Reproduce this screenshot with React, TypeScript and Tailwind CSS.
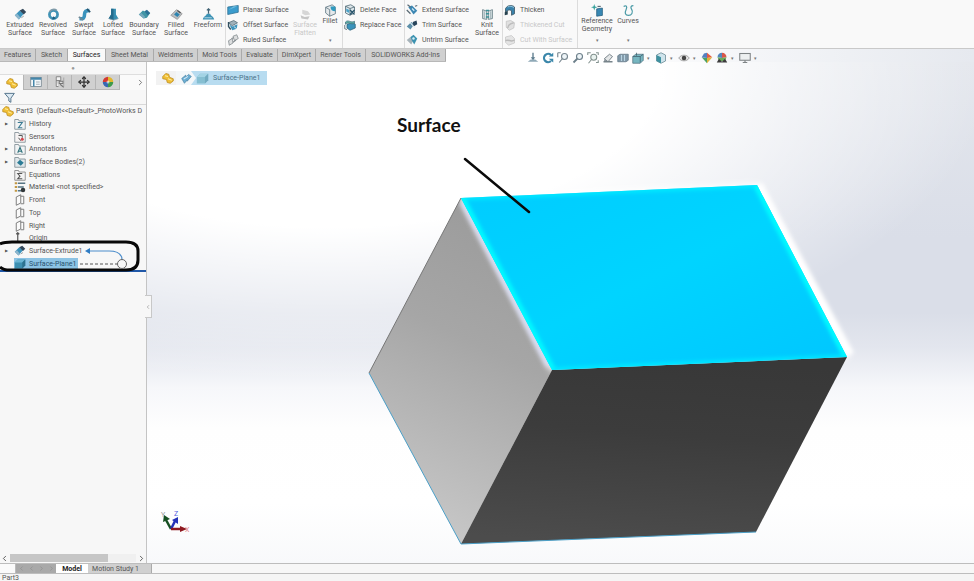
import { type ReactNode } from "react";
import { ChevronLeft, ChevronRight, Move } from "lucide-react";

type IconName = keyof typeof ART;

// all drawn on a 16 x 16 grid
const ART = {
  extrude: (
    <>
      <path d="M1 9l6-6 5 4-6 7z" fill="#3d94bd" />
      <path d="M7 3l4-2 4 4-3 3z" fill="#33475a" />
      <path d="M1 9l5 5 2-2-4-5z" fill="#8fb6cc" />
      <path d="M9 12l3-2" stroke="#8a8a8a" />
    </>
  ),
  revolve: (
    <>
      <circle cx="8" cy="8" r="5" fill="none" stroke="#3f92b5" strokeWidth="3.4" />
      <path d="M3 5a6 6 0 0 1 9-2" fill="none" stroke="#7f9aa8" strokeWidth="2" />
      <path d="M6 14l5-1-3-3z" fill="#1f5f80" />
    </>
  ),
  sweep: (
    <>
      <path d="M2 13c5 1 6-1 6-5s2-5 6-5" fill="none" stroke="#3a93bd" strokeWidth="4.4" />
      <path d="M1 11l5 4" stroke="#6f8793" strokeWidth="2" />
      <path d="M11 1l4 4" stroke="#27536b" strokeWidth="2" />
    </>
  ),
  loft: (
    <>
      <path d="M5 1h6v7l3 5-6 2-6-2 3-5z" fill="#368fb2" />
      <path d="M5 1h3v14l-6-2 3-5z" fill="#246b8c" />
      <path d="M2 13l6 2 6-2" fill="none" stroke="#87a0ac" />
    </>
  ),
  boundary: (
    <>
      <path d="M1 8l5-5 4 2 5 1-4 6-4 1z" fill="#3f94a5" />
      <path d="M8 4l3-2 4 4-3 3z" fill="#2b6f95" />
      <path d="M1 8l6 5 2-2-5-5z" fill="#75a8bd" />
    </>
  ),
  body: (
    <>
      <path d="M1 8l6-5v3l4-4 4 3-6 7v-2l-4 5z" fill="#6badd2" stroke="#4a86a8" />
      <path d="M4 9l6-4" stroke="#d9eef9" strokeWidth="1.5" />
    </>
  ),
  fill: (
    <>
      <path d="M1 9l7-7 7 5-6 7z" fill="#b9bdc0" stroke="#999" />
      <path d="M5 8l3-3 4 3-3 3z" fill="#2d84b0" />
      <path d="M9 3l4 3" stroke="#555" strokeWidth="1.6" />
    </>
  ),
  freeform: (
    <>
      <path d="M1 14c1-4 4-4 5-7h4c1 3 4 3 5 7z" fill="#3e93b5" />
      <path d="M8 1v6M6 3l2-2 2 2" fill="none" stroke="#416274" strokeWidth="1.5" />
      <path d="M3 12h9" stroke="#c5e2ed" />
    </>
  ),
  planar: (
    <>
      <path d="M1 4l14-2v9L1 14z" fill="#3b9ccd" stroke="#2b6f93" />
      <path d="M2 8l7-5 5 0z" fill="#6fbde0" />
    </>
  ),
  offset: (
    <>
      <path d="M2 5l7-3 5 3-7 4z" fill="#9fb1ba" stroke="#4d6470" />
      <path d="M3 7l4 3 7-3-1 6-6 2z" fill="#3d93bb" />
      <path d="M2 4v6l3 4" fill="none" stroke="#33505f" strokeWidth="1.8" />
      <path d="M9 10l4 3" stroke="#fff" />
    </>
  ),
  ruled: (
    <>
      <path d="M2 9l5-3 1 6-5 3zM8 3l5-2 2 5-5 3z" fill="#dcdedf" stroke="#7e868a" />
      <path d="M6 6l3-1M8 11l4-3" stroke="#868e92" strokeWidth="1.4" />
    </>
  ),
  flatten: (
    <>
      <path d="M4 2l7 2 3 4-6 1-4-2z" fill="#d6d6d6" />
      <path d="M2 9l5 2 6-1-2 4-8-1z" fill="#c5c5c5" />
    </>
  ),
  fillet: (
    <>
      <path d="M2 4l8-3 4 3v8l-7 3-5-4z" fill="#e5e9eb" stroke="#5d7480" />
      <path d="M8 3h6v6c-4 0-6-2-6-6z" fill="#2f9ac0" />
      <path d="M2 4l5 3v8" fill="none" stroke="#5d7480" />
    </>
  ),
  deleteFace: (
    <>
      <path d="M2 3l7-2 5 3v8l-6 3-6-3z" fill="#dfe8ec" stroke="#47616e" />
      <path d="M2 3l6 3 6-2M8 6v9" fill="none" stroke="#47616e" />
      <path d="M8 8l6 6M14 8l-6 6" stroke="#27546b" strokeWidth="1.8" />
      <path d="M3 6l4 2v4l-4-2z" fill="#4aa3c9" />
    </>
  ),
  replaceFace: (
    <>
      <path d="M4 7l8-2 3 2v5l-7 3-4-3z" fill="#3a93bb" stroke="#2b6077" />
      <path d="M2 4c4-4 7 2 12-1v3C9 8 6 3 2 7z" fill="#5bb0a6" stroke="#46707d" />
      <path d="M1 8v5l3 1" stroke="#41565f" fill="none" />
    </>
  ),
  extend: (
    <>
      <path d="M3 4l5-2 7 7-5 5z" fill="#3c87b3" />
      <path d="M1 8l5 5M2 1l4 3M12 3l3-1" stroke="#5b6b75" strokeWidth="1.6" />
      <path d="M8 6l3 3" stroke="#d4edf8" strokeWidth="1.5" />
    </>
  ),
  trim: (
    <>
      <path d="M1 10l6-6 4 3-5 7z" fill="#5c8fa9" />
      <path d="M9 4l5-2 1 5-5 3z" fill="#28445a" />
      <path d="M4 3l8 9" stroke="#e7eff3" strokeWidth="1.5" />
    </>
  ),
  untrim: (
    <>
      <path d="M1 8l5-4 4 4-3 6z" fill="#a6b3ba" />
      <path d="M6 4l4-3 5 5-4 8-3-5z" fill="#3c92b0" />
      <circle cx="10" cy="6" r="1.6" fill="#d6eff6" />
    </>
  ),
  knit: (
    <>
      <path d="M2 2l5 2v10l-5-1zM14 2L9 4v10l5-1z" fill="#e3ecee" stroke="#5f777f" />
      <path d="M6 3h4M6 7h4M6 11h4" stroke="#3d9098" strokeWidth="1.8" />
      <path d="M4 4v9M12 4v9" stroke="#8b9da4" />
    </>
  ),
  thicken: (
    <>
      <path d="M2 6c3-5 9-5 12-2v9l-4 2V9c-3-2-5-1-8 2z" fill="#3982ab" stroke="#38505c" />
      <path d="M1 11l4-2v5l-4 1z" fill="#27424f" />
      <path d="M5 4c3-2 6-1 8 1" stroke="#b3dcf0" fill="none" />
    </>
  ),
  thickCut: (
    <>
      <path d="M3 3l6-1 5 3-1 7-6 3-4-4z" fill="#e1e1e1" stroke="#c2c2c2" />
      <path d="M5 12c0-4 4-6 8-7" stroke="#bdbdbd" fill="none" strokeWidth="2" />
    </>
  ),
  surfCut: (
    <>
      <path d="M2 4l8-2 4 4v6l-8 3-4-4z" fill="#e4e4e4" stroke="#c6c6c6" />
      <path d="M2 9c4-3 7 3 12-1" stroke="#b9b9b9" fill="none" strokeWidth="2" />
    </>
  ),
  reference: (
    <>
      <path d="M7 6l7-1v9l-7 1z" fill="#3888b4" stroke="#2c6482" />
      <path d="M4 0l1 3 3 1-3 1-1 3-1-3-3-1 3-1z" fill="#3aa39e" />
      <path d="M8 3h4" stroke="#5c6f78" strokeWidth="1.5" />
    </>
  ),
  curves: (
    <path
      d="M2 3c3-2 5 0 3 4s-1 7 3 7 6-4 4-7-1-5 2-5"
      fill="none"
      stroke="#4a9aa6"
      strokeWidth="1.5"
    />
  ),
  part: (
    <>
      <path d="M1 6l4-4 4 1 1 4 5 2v3l-4 3-4-1-1-4-5-1z" fill="#f0bf35" stroke="#b98a1c" />
      <path d="M4 5l4 1M8 9l5 2" stroke="#fff0ae" strokeWidth="1.3" />
    </>
  ),
  props: (
    <>
      <rect x="1" y="2" width="14" height="12" fill="#f4f8fa" stroke="#6d7e88" />
      <path d="M1 3.5h14" stroke="#4587ab" strokeWidth="3" />
      <path d="M5 5v9" stroke="#4587ab" strokeWidth="2" />
      <path d="M8 8h5M8 11h5" stroke="#8a9aa3" />
    </>
  ),
  config: (
    <>
      <path d="M3 1h6v5H3zM3 6v8h3" fill="#f2f2f2" stroke="#6c6c6c" />
      <path d="M7 7h5v3H7zM8 11l5 4" fill="#ddd" stroke="#777" strokeWidth="1.4" />
      <path d="M13 2v12" stroke="#999" />
    </>
  ),
  ball: (
    <>
      <path d="M8 8V1a7 7 0 0 1 7 7z" fill="#e2b62d" />
      <path d="M8 8h7a7 7 0 0 1-7 7z" fill="#3f9a4a" />
      <path d="M8 8v7a7 7 0 0 1-7-7z" fill="#3767b3" />
      <path d="M8 8H1a7 7 0 0 1 7-7z" fill="#d33a33" />
      <circle cx="8" cy="8" r="2" fill="#fff" opacity=".6" />
    </>
  ),
  filter: <path d="M1 2h14L10 9v6l-3-2V9z" fill="#dce9f2" stroke="#52738a" strokeWidth="1.4" />,
  folderHistory: (
    <>
      <path d="M1 2h5l1 2h8v11H1z" fill="#f1f3f4" stroke="#73818a" />
      <path d="M5 6h6l-5 7h5" fill="none" stroke="#3c7b93" strokeWidth="1.5" />
    </>
  ),
  folderSensor: (
    <>
      <path d="M1 2h5l1 2h8v11H1z" fill="#f6f3f3" stroke="#73818a" />
      <path d="M6 6h5v3M6 9l3 4" fill="none" stroke="#555" strokeWidth="1.3" />
      <circle cx="11" cy="11" r="2" fill="#d3434b" />
    </>
  ),
  folderNote: (
    <>
      <path d="M1 2h5l1 2h8v11H1z" fill="#f1f3f4" stroke="#73818a" />
      <path d="M5 13l3-7 3 7M6 11h4" fill="none" stroke="#2d717b" strokeWidth="1.5" />
    </>
  ),
  folderBodies: (
    <>
      <path d="M1 2h5l1 2h8v11H1z" fill="#dfe7ea" stroke="#73818a" />
      <path d="M4 9l4-4 5 4-4 4z" fill="#2c7c96" />
    </>
  ),
  folderEq: (
    <>
      <path d="M1 2h5l1 2h8v11H1z" fill="#f3f3f3" stroke="#777" />
      <path d="M11 6H5l3 3.5L5 13h6" fill="none" stroke="#555" strokeWidth="1.4" />
    </>
  ),
  material: (
    <>
      <path d="M1 3h3M1 8h3M1 13h3" stroke="#c29843" strokeWidth="2.4" />
      <path d="M5 3h10M5 8h8M5 13h5" stroke="#567584" strokeWidth="2" />
      <circle cx="12" cy="12" r="3" fill="#32383b" />
    </>
  ),
  plane: <path d="M3 4l6-3v11l-6 3zM9 3h4v10H9" fill="#fafafa" stroke="#7b7b7b" strokeWidth="1.3" />,
  origin: <path d="M5 1v12h8M3 3l2-2 2 2" fill="none" stroke="#555" strokeWidth="1.6" />,
  surfPlane: (
    <>
      <path d="M1 6l4-4h10v8l-4 4H1z" fill="#3d8fb0" />
      <path d="M1 6l4-4h10l-4 4z" fill="#6bb5d3" />
      <path d="M11 6v8l4-4V2z" fill="#2d728f" />
    </>
  ),
  crumbPlane: (
    <>
      <path d="M1 6l4-4h10v8l-4 4H1z" fill="#86bfd2" />
      <path d="M1 6l4-4h10l-4 4z" fill="#a3d3e4" />
      <path d="M11 6v8l4-4V2z" fill="#72aac0" />
    </>
  ),
  normal: (
    <>
      <path d="M8 1v9" stroke="#5c7b8d" strokeWidth="1.8" />
      <path d="M5 7h6l-3 4z" fill="#5c7b8d" />
      <path d="M1 13l4-3h6l4 3z" fill="#8fa9b7" />
    </>
  ),
  rotate: (
    <>
      <path d="M12 4a5.5 5.500 0 1 0 0 8" fill="none" stroke="#3b87aa" strokeWidth="3" />
      <path d="M9 6h6V1zM9 9h6v5z" fill="#3b87aa" />
    </>
  ),
  zoomFit: (
    <>
      <circle cx="10" cy="6" r="4" fill="#eef5f8" stroke="#77868f" strokeWidth="1.5" />
      <path d="M7 9l-4 5M1 1v6M1 1h4" fill="none" stroke="#77868f" strokeWidth="1.5" />
    </>
  ),
  zoom: (
    <>
      <circle cx="10" cy="6" r="4" fill="#eef5f8" stroke="#6c7f8a" strokeWidth="1.5" />
      <path d="M7 9l-5 5" stroke="#6c7f8a" strokeWidth="2.4" />
    </>
  ),
  zoomArea: (
    <>
      <circle cx="9" cy="7" r="4" fill="#e9f2ef" stroke="#83928f" strokeWidth="1.4" />
      <path d="M6 10l-4 5M1 4V1h4M12 1h3v3M15 11v3h-3" fill="none" stroke="#83928f" strokeWidth="1.4" />
    </>
  ),
  prevView: (
    <>
      <path d="M3 9l7-6 4 3-6 7z" fill="#e3e6e7" stroke="#77838a" strokeWidth="1.3" />
      <path d="M2 13h12M4 10v3" stroke="#77838a" strokeWidth="2" />
    </>
  ),
  section: (
    <>
      <path d="M1 5l3-2h11v8l-3 2H1z" fill="#8198a8" stroke="#627785" />
      <path d="M6 4v8M10 4v8" stroke="#b8d4e2" strokeWidth="1.5" />
    </>
  ),
  orient: (
    <>
      <path d="M1 6l4-3h10v8l-4 4H1z" fill="#76b6c0" stroke="#547481" />
      <path d="M11 6h-10M11 6v8M11 6l4-3M6 1v4" stroke="#3d5e6c" fill="none" />
    </>
  ),
  display: (
    <>
      <path d="M2 4l6-3 6 3v8l-6 3-6-3z" fill="#cfe4ec" stroke="#648592" />
      <path d="M2 4l6 3v8l-6-3z" fill="#3e91a0" />
    </>
  ),
  eye: (
    <>
      <path d="M1 8c3-5 11-5 14 0-3 5-11 5-14 0z" fill="#e7e7e7" stroke="#8c8c8c" />
      <circle cx="8" cy="8" r="3" fill="#444" />
    </>
  ),
  appearance: (
    <>
      <path d="M8 8V1l7 6z" fill="#e25b45" />
      <path d="M8 8l7-1-7 8z" fill="#e0b33d" />
      <path d="M8 8v7L1 7z" fill="#4aa163" />
      <path d="M8 8L1 7l3-5 4-1z" fill="#547fc1" />
    </>
  ),
  scene: (
    <>
      <path d="M8 1a6 6 0 0 1 6 6l-6 1z" fill="#d8574a" />
      <path d="M8 1a6 6 0 0 0-6 6l6 1z" fill="#5488bd" />
      <path d="M2 7l6 1 6-1-2 5H4z" fill="#6bab5c" />
      <path d="M1 14l3-5 4 4 4-4 3 5z" fill="#3c3c3c" />
    </>
  ),
  monitor: (
    <>
      <rect x="1" y="2" width="14" height="9" fill="#edf0f1" stroke="#7f8486" strokeWidth="1.4" />
      <path d="M8 11v3M5 14h6" stroke="#7f8486" strokeWidth="1.6" />
    </>
  ),
};

function Icon({ name, className = "size-3" }: { name: IconName; className?: string }) {
  return (
    <svg viewBox="0 0 16 16" className={`shrink-0 ${className}`} aria-hidden="true">
      {ART[name]}
    </svg>
  );
}

const CREATE: { icon: IconName; lines: string[]; width: string }[] = [
  { icon: "extrude", lines: ["Extruded", "Surface"], width: "w-[34px]" },
  { icon: "revolve", lines: ["Revolved", "Surface"], width: "w-8" },
  { icon: "sweep", lines: ["Swept", "Surface"], width: "w-[30px]" },
  { icon: "loft", lines: ["Lofted", "Surface"], width: "w-7" },
  { icon: "boundary", lines: ["Boundary", "Surface"], width: "w-[34px]" },
  { icon: "fill", lines: ["Filled", "Surface"], width: "w-[30px]" },
  { icon: "freeform", lines: ["Freeform"], width: "w-[34px]" },
];

const RIBBON_TABS = [
  { label: "Features", width: "w-9" },
  { label: "Sketch", width: "w-8" },
  { label: "Surfaces", width: "w-[38px]" },
  { label: "Sheet Metal", width: "w-12" },
  { label: "Weldments", width: "w-11" },
  { label: "Mold Tools", width: "w-11" },
  { label: "Evaluate", width: "w-9" },
  { label: "DimXpert", width: "w-[38px]" },
  { label: "Render Tools", width: "w-[50px]" },
  { label: "SOLIDWORKS Add-Ins", width: "w-[80px]" },
];

const VIEW_TOOLS: { icon: IconName; label: string; menu?: boolean }[] = [
  { icon: "normal", label: "Normal to" },
  { icon: "rotate", label: "Rotate view" },
  { icon: "zoomFit", label: "Zoom to fit" },
  { icon: "zoom", label: "Zoom" },
  { icon: "zoomArea", label: "Zoom to area" },
  { icon: "prevView", label: "Previous view" },
  { icon: "section", label: "Section view" },
  { icon: "orient", label: "View orientation", menu: true },
  { icon: "display", label: "Display style", menu: true },
  { icon: "eye", label: "Hide or show items", menu: true },
  { icon: "appearance", label: "Edit appearance" },
  { icon: "scene", label: "Apply scene", menu: true },
  { icon: "monitor", label: "View settings", menu: true },
];

const TREE: { icon: IconName; label: string; open?: boolean; selected?: boolean }[] = [
  { icon: "folderHistory", label: "History", open: true },
  { icon: "folderSensor", label: "Sensors" },
  { icon: "folderNote", label: "Annotations", open: true },
  { icon: "folderBodies", label: "Surface Bodies(2)", open: true },
  { icon: "folderEq", label: "Equations" },
  { icon: "material", label: "Material <not specified>" },
  { icon: "plane", label: "Front" },
  { icon: "plane", label: "Top" },
  { icon: "plane", label: "Right" },
  { icon: "origin", label: "Origin" },
  { icon: "extrude", label: "Surface-Extrude1", open: true },
  { icon: "surfPlane", label: "Surface-Plane1", selected: true },
];

function BigTool({
  icon,
  lines,
  width,
  menu,
  disabled,
  high,
}: {
  icon: IconName;
  lines: string[];
  width: string;
  menu?: boolean;
  disabled?: boolean;
  high?: boolean;
}) {
  return (
    <button
      disabled={disabled}
      className={`flex h-full shrink-0 flex-col items-center whitespace-nowrap leading-2 ${width} ${
        high ? "pt-1" : "pt-2"
      } ${disabled ? "text-[#c8c8c8]" : ""}`}
    >
      <Icon name={icon} className="size-[13px]" />
      {lines.map((l) => (
        <span key={l}>{l}</span>
      ))}
      {menu && <span className="mt-auto mb-1 h-2 text-[5px] text-[#777]">▾</span>}
    </button>
  );
}

function ToolStack({ items, width }: { items: { icon: IconName; label: string; disabled?: boolean }[]; width: string }) {
  return (
    <div className={`flex shrink-0 flex-col pt-[2px] ${width}`}>
      {items.map((t) => (
        <button
          key={t.label}
          disabled={t.disabled}
          className="flex h-[15px] items-center gap-1 whitespace-nowrap pl-px text-left disabled:text-[#c8c8c8]"
        >
          <Icon name={t.icon} />
          {t.label}
        </button>
      ))}
    </div>
  );
}

function Group({ children, last }: { children: ReactNode; last?: boolean }) {
  return <div className={`flex shrink-0 ${last ? "" : "border-r border-[#dcdcdc]"}`}>{children}</div>;
}

function Ribbon() {
  return (
    <header className="flex h-[49px] shrink-0 overflow-hidden border-b border-[#c9c9c9] bg-[#f9f9f9] pl-[3px]">
      <Group>
        {CREATE.map((t) => (
          <BigTool key={t.lines[0]} {...t} />
        ))}
      </Group>
      <Group>
        <ToolStack
          width="w-[66px]"
          items={[
            { icon: "planar", label: "Planar Surface" },
            { icon: "offset", label: "Offset Surface" },
            { icon: "ruled", label: "Ruled Surface" },
          ]}
        />
        <BigTool icon="flatten" lines={["Surface", "Flatten"]} width="w-[26px]" disabled />
        <BigTool icon="fillet" lines={["Fillet"]} width="w-6" menu high />
      </Group>
      <Group>
        <ToolStack
          width="w-[61px]"
          items={[
            { icon: "deleteFace", label: "Delete Face" },
            { icon: "replaceFace", label: "Replace Face" },
          ]}
        />
      </Group>
      <Group>
        <ToolStack
          width="w-[67px]"
          items={[
            { icon: "extend", label: "Extend Surface" },
            { icon: "trim", label: "Trim Surface" },
            { icon: "untrim", label: "Untrim Surface" },
          ]}
        />
        <BigTool icon="knit" lines={["Knit", "Surface"]} width="w-[30px]" />
      </Group>
      <Group>
        <ToolStack
          width="w-[74px]"
          items={[
            { icon: "thicken", label: "Thicken" },
            { icon: "thickCut", label: "Thickened Cut", disabled: true },
            { icon: "surfCut", label: "Cut With Surface", disabled: true },
          ]}
        />
      </Group>
      <Group last>
        <BigTool icon="reference" lines={["Reference", "Geometry"]} width="w-[38px]" menu high />
        <BigTool icon="curves" lines={["Curves"]} width="w-6" menu high />
      </Group>
    </header>
  );
}

function FeatureTree() {
  return (
    <aside className="relative z-10 flex w-[147px] shrink-0 flex-col border-r border-[#c4c4c4] bg-[#f7f7f7]">
      <div className="h-[13px] border-b border-[#dedede] text-center text-[6px] leading-3 text-[#999]">●</div>
      <div className="flex h-[15px] items-stretch bg-[#fafafa]">
        {(["part", "props", "config"] as const).map((n, i) => (
          <button
            key={n}
            aria-label={n}
            className={`flex w-6 items-center justify-center border-r border-[#b5b5b5] ${
              i === 0 ? "bg-[#fbfbfb]" : "border-b bg-[#d0d0d0]"
            }`}
          >
            <Icon name={n} />
          </button>
        ))}
        <button aria-label="dimensions" className="flex w-6 items-center justify-center border-r border-b border-[#b5b5b5] bg-[#d0d0d0]">
          <Move size={12} color="#333" strokeWidth={2.5} />
        </button>
        <button aria-label="display" className="flex w-6 items-center justify-center border-r border-b border-[#b5b5b5] bg-[#d0d0d0]">
          <Icon name="ball" />
        </button>
        <button aria-label="more" className="ml-auto pr-px">
          <ChevronRight size={9} color="#555" />
        </button>
      </div>
      <div className="flex h-[15px] items-center border-b border-[#d8d8d8] pl-1">
        <Icon name="filter" className="size-[11px]" />
      </div>

      <ul className="grid h-[167px] auto-rows-fr border-b-2 border-[#2058a8]">
        <li className="flex items-center gap-[2px] overflow-hidden whitespace-nowrap pl-[2px]">
          <Icon name="part" />
          <span>Part3&nbsp; (Default&lt;&lt;Default&gt;_PhotoWorks D</span>
        </li>
        {TREE.map((n) => (
          <li key={n.label} className="flex items-center whitespace-nowrap">
            <span className="w-[14px] pl-[5px] text-[4px] text-[#555]">{n.open && "▶"}</span>
            <span className={`flex items-center gap-[3px] pr-[2px] ${n.selected ? "bg-[#8cc3e4] text-[#28516c]" : ""}`}>
              <Icon name={n.icon} />
              {n.label}
            </span>
          </li>
        ))}
      </ul>

      {/* hand-drawn marker round the two surface features */}
      <svg viewBox="0 0 147 36" className="absolute top-[177px] left-0 h-9 w-[147px]" aria-hidden="true">
        <path d="M0 5Q4 3 12 3h114q12 0 12 9v9q0 10-12 10H10Q3 31 0 28" fill="none" stroke="#080808" strokeWidth="3" />
        <path d="M89 12h20q13 0 13 9" fill="none" stroke="#4c8dcb" strokeWidth="1.2" />
        <path d="M85 12l5-3v6z" fill="#2f7cc4" />
        <path d="M80 25h38" stroke="#555" strokeDasharray="3 2" />
        <circle cx="122" cy="25" r="4.5" fill="#f7f7f7" stroke="#666" />
      </svg>

      <div className="mt-auto flex h-[10px] items-center gap-px">
        <ChevronLeft size={9} color="#333" />
        <div className="flex h-2 flex-1 bg-[#f0f0f0]">
          <div className="w-7/9 bg-[#c6c6c6]" />
        </div>
        <ChevronRight size={9} color="#333" />
      </div>

      <button
        aria-label="Collapse panel"
        className="absolute top-[233px] -right-[6px] flex h-[23px] w-[7px] items-center justify-center border border-l-0 border-[#c8c8c8] bg-[#f7f7f7]"
      >
        <ChevronLeft size={6} color="#777" />
      </button>
    </aside>
  );
}

function Scene() {
  return (
    <svg viewBox="0 0 827 501" className="absolute inset-0 h-full w-full" role="img" aria-label="Cube with selected top surface">
      <defs>
        <linearGradient id="side" x1="0.6" y1="0" x2="0.35" y2="1">
          <stop offset="0" stopColor="#9b9b9b" />
          <stop offset="0.4" stopColor="#a6a6a6" />
          <stop offset="1" stopColor="#c9c9c9" />
        </linearGradient>
        <linearGradient id="front" x1="0.5" y1="0" x2="0.35" y2="1">
          <stop offset="0" stopColor="#383838" />
          <stop offset="0.4" stopColor="#3c3c3c" />
          <stop offset="1" stopColor="#4c4c4c" />
        </linearGradient>
        <linearGradient id="top" x1="0" y1="0" x2="1" y2="1">
          <stop offset="0" stopColor="#00ccff" />
          <stop offset="0.5" stopColor="#00d4ff" />
          <stop offset="1" stopColor="#00c6ff" />
        </linearGradient>
        <filter id="glow" x="-10%" y="-10%" width="120%" height="120%">
          <feGaussianBlur stdDeviation="3" />
        </filter>
        <filter id="rim" x="-10%" y="-10%" width="120%" height="120%">
          <feGaussianBlur stdDeviation="2" />
        </filter>
        <clipPath id="topClip">
          <path d="M314 136l296-13 90 172-295 13z" />
        </clipPath>
      </defs>

      <path d="M314 136l91 172-91 174-92-171z" fill="url(#side)" />
      <path d="M314 136l296-13 90 172-295 13z" fill="#fff" stroke="#fff" strokeWidth="3" filter="url(#glow)" />
      <path d="M611 123l92 170" stroke="#fff" strokeWidth="9" filter="url(#rim)" />
      <path d="M316 140l86 164" stroke="#d6daf2" strokeWidth="6" filter="url(#rim)" />
      <path d="M405 308l295-13-91 175-295 12z" fill="url(#front)" />
      <path d="M314 136l296-13 90 172-295 13z" fill="url(#top)" />
      <g clipPath="url(#topClip)">
        <path d="M314 136l296-13 90 172-295 13z" fill="none" stroke="#00f0ff" strokeWidth="4" filter="url(#rim)" />
        <path d="M314 136l91 172M610 123l90 172" fill="none" stroke="#00faff" strokeWidth="7" filter="url(#rim)" />
      </g>
      <path d="M314 136l-92 175" fill="none" stroke="#777" />
      <path d="M222 311l92 171 295-12" fill="none" stroke="#4b9fc7" />

      <path d="M318 97l64 53" stroke="#0a0a0a" strokeWidth="2.5" strokeLinecap="round" />
      <text x="250" y="70" className="fill-[#111] font-['Lato'] text-[19px] font-bold">
        Surface
      </text>

      {/* orientation triad */}
      <g strokeWidth="2.5">
        <path d="M24 467l-5-9" stroke="#164f22" />
        <path d="M24 467l4-8" stroke="#2532b8" />
        <path d="M24 467h11" stroke="#8e1820" />
      </g>
      <path d="M16 460l1-7 6 4z" fill="#164f22" />
      <path d="M25 458l6-3v7z" fill="#2532b8" />
      <path d="M33 464l7 3-7 3z" fill="#8e1820" />
      <g className="font-['Roboto'] text-[7px]">
        <text x="14" y="455" fill="#999">Y</text>
        <text x="27" y="454" fill="#5360e0">Z</text>
        <text x="38" y="470" fill="#e27f8b">X</text>
      </g>
    </svg>
  );
}

function Viewport() {
  return (
    <main className="relative min-w-0 flex-1 overflow-hidden bg-[radial-gradient(ellipse_80%_62%_at_22%_2%,#ffffff_50%,#ffffff00_100%),linear-gradient(180deg,#e4e7ed_0%,#dadee8_35%,#dadee8_50%,#e3e6ee_57%,#f6f7fa_65%,#fefefe_73%,#ffffff_88%,#f8f9fb_100%)]">
      <Scene />
      <nav aria-label="Selection" className="relative mt-[9px] ml-[9px] flex h-[14px] w-max items-center bg-[#b8dcf0] text-[#4a7288]">
        <a href="#part" aria-label="Part3" className="flex h-full w-5 items-center justify-center bg-[#f2f2f2] pl-1">
          <Icon name="part" />
        </a>
        <a
          href="#body"
          aria-label="Surface body"
          className="flex h-full w-5 items-center justify-center bg-[#f4f7f9] [clip-path:polygon(0_0,75%_0,100%_50%,75%_100%,0_100%)]"
        >
          <Icon name="body" className="size-[11px]" />
        </a>
        <a href="#feature" className="flex items-center gap-1 pr-[7px]">
          <Icon name="crumbPlane" className="size-[13px]" />
          Surface-Plane1
        </a>
      </nav>
    </main>
  );
}

export default function App() {
  return (
    <div className="flex h-screen flex-col overflow-hidden bg-white font-['Roboto','Noto_Sans',sans-serif] text-[7px] leading-2 text-[#555]">
      <Ribbon />

      <div className="flex h-[13px] shrink-0 items-stretch justify-between bg-linear-to-r from-white from-60% to-[#e6e9ef]">
        <div role="tablist" className="flex shrink-0 border-b border-[#b8b8b8]">
          {RIBBON_TABS.map((t) => (
            <button
              key={t.label}
              role="tab"
              aria-selected={t.label === "Surfaces"}
              className={`shrink-0 whitespace-nowrap border-r border-[#aaa] ${t.width} ${
                t.label === "Surfaces" ? "bg-[#f9f9f9] text-[#222]" : "bg-[#d0d0d0]"
              }`}
            >
              {t.label}
            </button>
          ))}
        </div>
        <div role="toolbar" aria-label="View" className="z-10 mr-[215px] flex h-[18px] items-center gap-[3px]">
          {VIEW_TOOLS.map((t) => (
            <button key={t.label} aria-label={t.label} className="flex items-center">
              <Icon name={t.icon} />
              {t.menu && <span className="w-2 text-center text-[5px] text-[#777]">▾</span>}
            </button>
          ))}
        </div>
      </div>

      <div className="flex min-h-0 flex-1">
        <FeatureTree />
        <Viewport />
      </div>

      <div role="tablist" className="flex h-[11px] shrink-0 border-y border-[#bdbdbd] bg-[#f7f7f7]">
        <span className="w-4 border-r border-[#bbb] bg-[#fafafa]" />
        <span className="flex w-10 items-center justify-around bg-[#a9a9a9] text-[#888]">
          <ChevronLeft size={7} />
          <ChevronLeft size={7} />
          <ChevronRight size={7} />
          <ChevronRight size={7} />
        </span>
        <button role="tab" aria-selected="true" className="w-8 bg-white font-bold text-[#222]">
          Model
        </button>
        <button role="tab" aria-selected="false" className="w-16 border-r border-[#aaa] bg-[#d0d0d0] pr-2">
          Motion Study 1
        </button>
      </div>
      <footer className="h-[7px] shrink-0 bg-[#f5f5f5] pl-[2px]">Part3</footer>
    </div>
  );
}
